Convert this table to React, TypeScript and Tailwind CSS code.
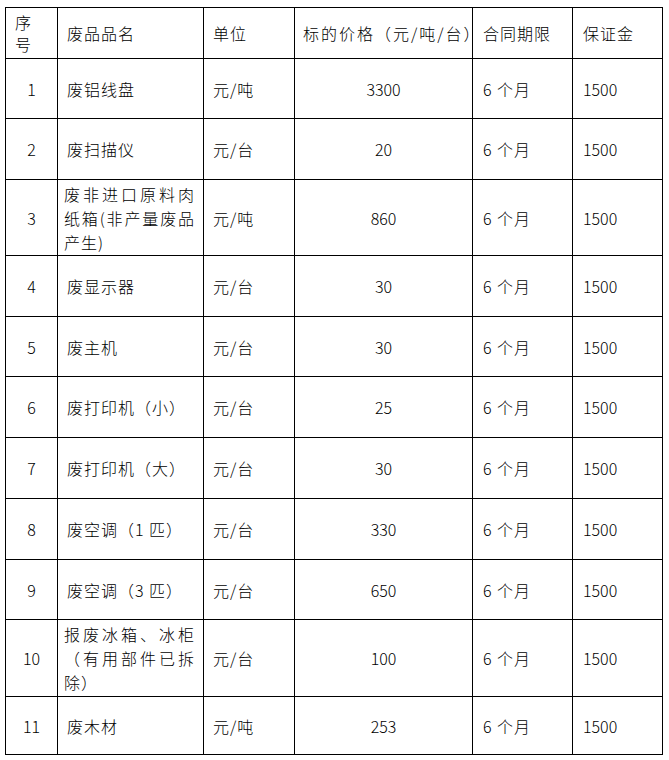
import React from 'react';

type Row = {
  no: string;
  name: React.ReactNode;
  unit: string;
  price: string;
  h: string;
};

const Justified = ({ lines }: { lines: string[] }) => (
  <div className="-ml-[3px] leading-[24px]">
    {lines.map((l, i) =>
      i < lines.length - 1 ? (
        <div key={i} className="w-[131px] [text-align-last:justify] text-justify">
          {l}
        </div>
      ) : (
        <div key={i}>{l}</div>
      )
    )}
  </div>
);

const ROWS: Row[] = [
  { no: '1', name: '废铝线盘', unit: '元/吨', price: '3300', h: 'h-[60px]' },
  { no: '2', name: '废扫描仪', unit: '元/台', price: '20', h: 'h-[61px]' },
  {
    no: '3',
    name: <Justified lines={['废非进口原料肉', '纸箱(非产量废品', '产生)']} />,
    unit: '元/吨',
    price: '860',
    h: 'h-[76px]',
  },
  { no: '4', name: '废显示器', unit: '元/台', price: '30', h: 'h-[61px]' },
  { no: '5', name: '废主机', unit: '元/台', price: '30', h: 'h-[60px]' },
  { no: '6', name: '废打印机（小）', unit: '元/台', price: '25', h: 'h-[61px]' },
  { no: '7', name: '废打印机（大）', unit: '元/台', price: '30', h: 'h-[61px]' },
  { no: '8', name: '废空调（1 匹）', unit: '元/台', price: '330', h: 'h-[61px]' },
  { no: '9', name: '废空调（3 匹）', unit: '元/台', price: '650', h: 'h-[60px]' },
  {
    no: '10',
    name: <Justified lines={['报废冰箱、冰柜', '（有用部件已拆', '除）']} />,
    unit: '元/台',
    price: '100',
    h: 'h-[77px]',
  },
  { no: '11', name: '废木材', unit: '元/吨', price: '253', h: 'h-[58px]' },
];

const cell = 'border-r border-b border-black flex items-center';

export default function App() {
  return (
    <div
      className="min-h-[760px] bg-white pt-[7px] pl-[5px] text-black text-[16px] font-light"
      style={{ fontFamily: "'Noto Sans CJK SC', 'Noto Sans', sans-serif" }}
    >
      <div className="grid w-[658px] grid-cols-[52px_146px_91px_178px_100px_90px] border-l border-t border-black">
        {/* header */}
        <div className={`${cell} h-[51px] pl-[9px] leading-[22px]`}>
          <div>
            序<br />号
          </div>
        </div>
        <div className={`${cell} h-[51px] pl-[9px] tracking-[1px]`}>废品品名</div>
        <div className={`${cell} h-[51px] pl-[9px] tracking-[1px]`}>单位</div>
        <div className={`${cell} h-[51px] pl-[8px] whitespace-nowrap tracking-[2px]`}>标的价格（元/吨/台）</div>
        <div className={`${cell} h-[51px] pl-[10px] tracking-[1px]`}>合同期限</div>
        <div className={`${cell} h-[51px] pl-[10px] tracking-[1px]`}>保证金</div>

        {ROWS.map((r) => (
          <React.Fragment key={r.no}>
            <div className={`${cell} ${r.h} justify-center`}>{r.no}</div>
            <div className={`${cell} ${r.h} pl-[9px] tracking-[1px]`}>{r.name}</div>
            <div className={`${cell} ${r.h} pl-[9px] tracking-[1px]`}>{r.unit}</div>
            <div className={`${cell} ${r.h} justify-center`}>{r.price}</div>
            <div className={`${cell} ${r.h} pl-[10px] tracking-[1px]`}>6 个月</div>
            <div className={`${cell} ${r.h} pl-[10px]`}>1500</div>
          </React.Fragment>
        ))}
      </div>
    </div>
  );
}
